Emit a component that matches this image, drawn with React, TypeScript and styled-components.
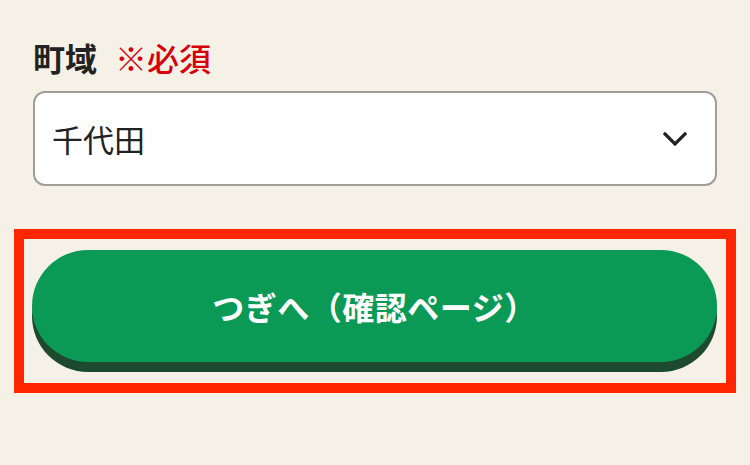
import styled, { createGlobalStyle } from "styled-components";

const GlobalStyle = createGlobalStyle`
  html, body {
    margin: 0;
    padding: 0;
    background: #f6f1e7;
  }
  body {
    font-family: "Noto Sans CJK JP", "Noto Sans", sans-serif;
  }
`;

const Page = styled.div`
  padding: 35px 33px 0;
  display: flex;
  flex-direction: column;
`;

const Label = styled.div`
  display: flex;
  align-items: center;
  gap: 18px;
  font-size: 32px;
  line-height: 45px;
  font-weight: 700;
  color: #222;
  margin-bottom: 11px;
`;

const Required = styled.span`
  color: #d6000c;
  font-weight: 500;
`;

const SelectBox = styled.div`
  box-sizing: border-box;
  height: 95px;
  display: flex;
  align-items: center;
  justify-content: space-between;
  padding: 0 28px 0 17px;
  background: #fff;
  border: 2px solid #a09e98;
  border-radius: 12px;
  font-size: 31px;
  color: #222;
`;

const Highlight = styled.div`
  margin: 43px -19px 0;
  border: 10px solid #ff2600;
  padding: 11px 9px 11px 8px;
`;

const NextButton = styled.button`
  display: block;
  width: 100%;
  height: 112px;
  border: none;
  border-radius: 56px;
  background: #0a9a55;
  box-shadow: 0 10px 0 #1d4a2f;
  margin-bottom: 10px;
  color: #fff;
  font-family: inherit;
  font-size: 32px;
  font-weight: 700;
  letter-spacing: 0.5px;
  cursor: pointer;
`;

function Chevron() {
  return (
    <svg width="24" height="16" viewBox="0 0 24 16" fill="none">
      <path
        d="M2 3 L12 13 L22 3"
        stroke="#222"
        strokeWidth="3.2"
        strokeLinecap="square"
      />
    </svg>
  );
}

export default function App() {
  return (
    <>
      <GlobalStyle />
      <Page>
        <Label>
          町域<Required>※必須</Required>
        </Label>
        <SelectBox>
          <span>千代田</span>
          <Chevron />
        </SelectBox>
        <Highlight>
          <NextButton>つぎへ（確認ページ）</NextButton>
        </Highlight>
      </Page>
    </>
  );
}
